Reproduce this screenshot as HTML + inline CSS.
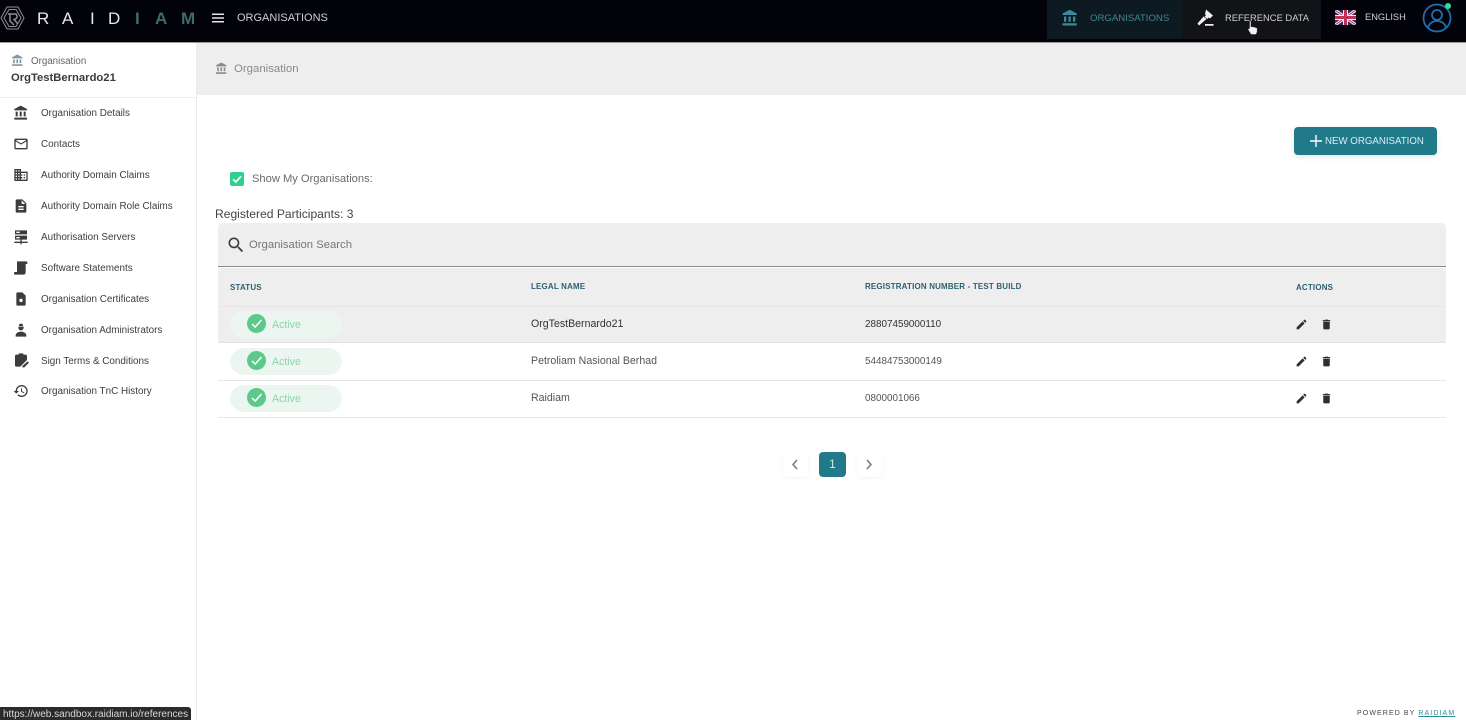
<!DOCTYPE html>
<html><head><meta charset="utf-8"><style>
*{box-sizing:border-box}
html,body{margin:0;padding:0;width:1466px;height:720px;overflow:hidden;background:#fff;font-family:"Liberation Sans",sans-serif;color:#3a3a3a}
.a{position:absolute;white-space:nowrap}
svg{position:absolute;display:block}
.nav{position:absolute;left:41px;font-size:9.9px;color:#3d3d3d;white-space:nowrap;line-height:14px}
.th{position:absolute;font-size:7.95px;font-weight:bold;color:#2c6170;white-space:nowrap;line-height:12px;letter-spacing:.2px}
.td{position:absolute;font-size:10.6px;color:#555;white-space:nowrap;line-height:14px}
.num{font-size:9.9px}
.pill{position:absolute;left:230px;width:112px;height:27px;border-radius:14px;background:#ecf6f0}
.act{position:absolute;left:272px;font-size:10.6px;color:#8fd3a8;line-height:14px}
.lg{position:absolute;top:9px;font-size:17px;line-height:19px;color:#e8e8e8}
.lt{position:absolute;top:9px;font-size:17px;line-height:19px;font-weight:bold;color:#3f6b6b}
</style></head><body>
<div class="a" style="left:0;top:0;width:1466px;height:42px;background:#02020a"></div>
<div class="a" style="left:0;top:42px;width:1466px;height:1px;background:#999"></div>
<svg style="left:0;top:5px" width="26" height="26" viewBox="0 0 26 26" fill="none" stroke="#8f8f8f" stroke-width="1"><path d="M7 2H18L24 13 18 24H7L1 13Z"/><path d="M9 4.500H16L21 13 16 21.500H9L4 13Z"/><path d="M8 9H16Q19 13 14 14.500L18 19M10 9V16L14 20" stroke-width="1.500"/></svg>
<div class="lg" style="left:37px">R</div>
<div class="lg" style="left:62px">A</div>
<div class="lg" style="left:90px">I</div>
<div class="lg" style="left:108px">D</div>
<div class="lt" style="left:135px">I</div>
<div class="lt" style="left:155px">A</div>
<div class="lt" style="left:181px">M</div>
<svg style="left:210px;top:9px" width="16" height="18" viewBox="0 0 24 24" preserveAspectRatio="none" fill="#e4e4e4"><path d="M3 18h18v-2H3v2zm0-5h18v-2H3v2zm0-7v2h18V6H3z"/></svg>
<div class="a" style="left:237px;top:11px;font-size:11px;line-height:14px;color:#d0d0d0">ORGANISATIONS</div>

<div class="a" style="left:1047px;top:0;width:135px;height:39px;background:#0d1a22"></div>
<div class="a" style="left:1182px;top:0;width:139px;height:39px;background:#121316"></div>
<svg style="left:1061px;top:9px" width="18" height="18" viewBox="0 0 24 24" fill="#3e8a9c"><path d="M4 10v7h3v-7H4zm6 0v7h3v-7h-3zM2 22h19v-3H2v3zm14-12v7h3v-7h-3zm-4.5-9L2 6v2h19V6l-9.5-5z"/></svg>
<div class="a" style="left:1090px;top:11px;font-size:9.6px;line-height:15px;color:#3f8797">ORGANISATIONS</div>
<svg style="left:1197px;top:9px" width="18" height="18" viewBox="0 0 18 18" fill="#f0f0f0"><path d="M9 .5l7 6-3 3-1.200-1-1.500 1.500L7.500 7.500 9 6 8 5zM6.500 7.500l3 2.500-7.500 6.500-1.500-2zM8 15h8.500v1.800H8z"/></svg>
<div class="a" style="left:1225px;top:11px;font-size:9.4px;line-height:14px;color:#d0d0d0">REFERENCE DATA</div>
<svg style="left:1247px;top:20px" width="12" height="15" viewBox="0 0 12 15"><path d="M2.500 1h1.500v6l1.200-.4 1.100.3 1.200.2 1.500.5 1.200.6v3.300l-1 3H4L1 9.500c-.3-1 .8-1.300 1.500-.7z" fill="#f2f2f2" stroke="#222" stroke-width=".5"/></svg>
<svg style="left:1335px;top:10px" width="21" height="15" viewBox="0 0 21 15"><rect width="21" height="15" fill="#2a2a55"/><path d="M0 0L21 15M21 0L0 15" stroke="#eee" stroke-width="3"/><path d="M0 0L21 15M21 0L0 15" stroke="#c2305a" stroke-width="1"/><path d="M10.500 0V15M0 7.500H21" stroke="#eee" stroke-width="5"/><path d="M10.500 0V15M0 7.500H21" stroke="#c2305a" stroke-width="3"/></svg>
<div class="a" style="left:1365px;top:10px;font-size:9.3px;line-height:14px;color:#d0d0d0">ENGLISH</div>
<svg style="left:1422px;top:2px" width="30" height="31" viewBox="0 0 30 31" fill="none" stroke="#1f6fb0" stroke-width="1.800"><circle cx="15" cy="16" r="13.500"/><circle cx="15" cy="13" r="5"/><path d="M6 26c1-5 5-7 9-7s8 2 9 7"/></svg>
<div class="a" style="left:1445px;top:3px;width:6px;height:6px;border-radius:50%;background:#2ee08e"></div>

<div class="a" style="left:196px;top:43px;width:1px;height:677px;background:#ececec"></div>
<div class="a" style="left:197px;top:43px;width:1269px;height:52px;background:#eeeeee"></div>
<div class="a" style="left:0;top:97px;width:196px;height:1px;background:#efefef"></div>
<svg style="left:11px;top:54px" width="13" height="13" viewBox="0 0 24 24" fill="#7b9aa5"><path d="M4 10v7h3v-7H4zm6 0v7h3v-7h-3zM2 22h19v-3H2v3zm14-12v7h3v-7h-3zm-4.500-9L2 6v2h19V6l-9.500-5z"/></svg>
<div class="a" style="left:31px;top:55px;font-size:9.750px;line-height:13px;color:#666">Organisation</div>
<div class="a" style="left:11px;top:71px;font-size:11.250px;line-height:15px;font-weight:bold;color:#3b3b3b">OrgTestBernardo21</div>
<svg style="left:215px;top:62px" width="13" height="13" viewBox="0 0 24 24" fill="#8a8a8a"><path d="M4 10v7h3v-7H4zm6 0v7h3v-7h-3zM2 22h19v-3H2v3zm14-12v7h3v-7h-3zm-4.500-9L2 6v2h19V6l-9.500-5z"/></svg>
<div class="a" style="left:234px;top:62px;font-size:11.400px;line-height:15px;color:#8a8a8a">Organisation</div>

<svg style="left:13px;top:105px" width="16" height="16" viewBox="0 0 24 24" fill="#3c3c3c"><path d="M4 10v7h3v-7H4zm6 0v7h3v-7h-3zM2 22h19v-3H2v3zm14-12v7h3v-7h-3zm-4.500-9L2 6v2h19V6l-9.500-5z"/></svg>
<div class="nav" style="top:107px">Organisation Details</div>
<svg style="left:13px;top:136px" width="16" height="16" viewBox="0 0 24 24" fill="#3c3c3c"><path d="M20 4H4c-1.100 0-1.990.9-1.990 2L2 18c0 1.100.9 2 2 2h16c1.100 0 2-.9 2-2V6c0-1.100-.9-2-2-2zm0 14H4V8l8 5 8-5v10zm-8-7L4 6h16l-8 5z"/></svg>
<div class="nav" style="top:138px">Contacts</div>
<svg style="left:13px;top:167px" width="16" height="16" viewBox="0 0 24 24" fill="#3c3c3c"><path d="M12 7V3H2v18h20V7H12zM6 19H4v-2h2v2zm0-4H4v-2h2v2zm0-4H4V9h2v2zm0-4H4V5h2v2zm4 12H8v-2h2v2zm0-4H8v-2h2v2zm0-4H8V9h2v2zm0-4H8V5h2v2zm10 12h-8v-2h2v-2h-2v-2h2v-2h-2V9h8v10zm-2-8h-2v2h2v-2zm0 4h-2v2h2v-2z"/></svg>
<div class="nav" style="top:169px">Authority Domain Claims</div>
<svg style="left:13px;top:198px" width="16" height="16" viewBox="0 0 24 24" fill="#3c3c3c"><path d="M14 2H6c-1.100 0-1.990.9-1.990 2L4 20c0 1.100.89 2 1.990 2H18c1.100 0 2-.9 2-2V8l-6-6zm2 16H8v-2h8v2zm0-4H8v-2h8v2zm-3-5V3.500L18.500 9H13z"/></svg>
<div class="nav" style="top:200px">Authority Domain Role Claims</div>
<svg style="left:13px;top:229px" width="16" height="16" viewBox="0 0 24 24" fill="#3c3c3c"><path d="M3 2h18v6H3zM3 10h18v6H3zM11 16h2v3h9v2h-9v2h-2v-2H2v-2h9z"/><path d="M5 4h5v2H5zM5 12h5v2H5z" fill="#fff"/></svg>
<div class="nav" style="top:231px">Authorisation Servers</div>
<svg style="left:13px;top:260px" width="16" height="16" viewBox="0 0 24 24" fill="#3c3c3c"><path d="M6 2h14c2 0 2 3 1 4h-2v12c0 2-1 4-3 4H3c-2 0-2-4 0-4h3z"/></svg>
<div class="nav" style="top:262px">Software Statements</div>
<svg style="left:13px;top:291px" width="16" height="16" viewBox="0 0 24 24" fill="#3c3c3c"><path d="M14 2H7c-1.100 0-2 .9-2 2v16c0 1.100.9 2 2 2h10c1.100 0 2-.9 2-2V7z"/><circle cx="12" cy="14" r="2.500" fill="#fff"/></svg>
<div class="nav" style="top:293px">Organisation Certificates</div>
<svg style="left:13px;top:322px" width="16" height="16" viewBox="0 0 24 24" fill="#3c3c3c"><path d="M12 2l3 2v2H9V4zM8 7h8v1c0 2.500-1.800 4.500-4 4.500S8 10.500 8 8zM4 20c0-3 4-5.500 8-5.500s8 2.500 8 5.500v2H4z"/></svg>
<div class="nav" style="top:324px">Organisation Administrators</div>
<svg style="left:13px;top:352px" width="16" height="16" viewBox="0 0 24 24" fill="#3c3c3c"><path d="M9 2h6l1 2h3c1 0 2 1 2 2v6l-10 10H5c-1 0-2-1-2-2V6c0-1 1-2 2-2h3zM22 14l2 2-7 7h-3v-2z"/></svg>
<div class="nav" style="top:355px">Sign Terms &amp; Conditions</div>
<svg style="left:13px;top:383px" width="16" height="16" viewBox="0 0 24 24" fill="#3c3c3c"><path d="M13 3c-4.970 0-9 4.030-9 9H1l3.890 3.890.07.14L9 12H6c0-3.870 3.130-7 7-7s7 3.130 7 7-3.130 7-7 7c-1.930 0-3.680-.79-4.940-2.060l-1.420 1.420C8.270 19.990 10.510 21 13 21c4.970 0 9-4.030 9-9s-4.030-9-9-9zm-1 5v5l4.280 2.540.72-1.210-3.500-2.080V8H12z"/></svg>
<div class="nav" style="top:385px">Organisation TnC History</div>

<div class="a" style="left:1294px;top:127px;width:143px;height:28px;background:#207a89;border-radius:4px;box-shadow:0 2px 6px rgba(0,0,0,.1)"></div>
<svg style="left:1309px;top:134px" width="14" height="14" viewBox="0 0 14 14" fill="#fff"><path d="M6.300 1h1.400v5.300H13v1.400H7.700V13H6.300V7.700H1V6.300h5.300z"/></svg>
<div class="a" style="left:1325px;top:135px;font-size:9.700px;line-height:14px;color:#d9eef1">NEW ORGANISATION</div>

<div class="a" style="left:230px;top:172px;width:14px;height:14px;background:#2dd08f;border-radius:2px"></div>
<svg style="left:230px;top:172px" width="14" height="14" viewBox="0 0 14 14" fill="none" stroke="#fff" stroke-width="1.700"><path d="M3 7.300l2.800 2.700L11 4.300"/></svg>
<div class="a" style="left:252px;top:172px;font-size:11.150px;line-height:15px;color:#6a6a6a">Show My Organisations:</div>
<div class="a" style="left:215px;top:206px;font-size:12.100px;line-height:16px;color:#444">Registered Participants: 3</div>

<div class="a" style="left:218px;top:223px;width:1228px;height:44px;background:#eeeeee;border-radius:5px 5px 0 0"></div>
<div class="a" style="left:218px;top:266px;width:1228px;height:1px;background:#8a8a8a"></div>
<svg style="left:226px;top:235px" width="20" height="20" viewBox="0 0 24 24" fill="#3c3c3c"><path d="M15.500 14h-.79l-.28-.27C15.410 12.590 16 11.110 16 9.500 16 5.910 13.090 3 9.500 3S3 5.910 3 9.500 5.910 16 9.500 16c1.610 0 3.090-.59 4.230-1.570l.27.28v.79l5 4.990L20.490 19l-4.990-5zm-6 0C7.010 14 5 11.990 5 9.500S7.010 5 9.500 5 14 7.010 14 9.500 11.990 14 9.500 14z"/></svg>
<div class="a" style="left:249px;top:238px;font-size:11.300px;line-height:15px;color:#777">Organisation Search</div>

<div class="a" style="left:218px;top:268px;width:1228px;height:38px;background:#eeeeee"></div>
<div class="th" style="left:230px;top:282px">STATUS</div>
<div class="th" style="left:531px;top:281px">LEGAL NAME</div>
<div class="th" style="left:865px;top:281px">REGISTRATION NUMBER - TEST BUILD</div>
<div class="th" style="left:1296px;top:282px">ACTIONS</div>

<div class="a" style="left:218px;top:306px;width:1228px;height:37px;background:#eeeeee;border-top:1px solid #e6e6e6;border-bottom:1px solid #e2e2e2"></div>
<div class="a" style="left:218px;top:380px;width:1228px;height:1px;background:#e6e6e6"></div>
<div class="a" style="left:218px;top:417px;width:1228px;height:1px;background:#e6e6e6"></div>

<div class="pill" style="top:311px"></div><div class="pill" style="top:348px"></div><div class="pill" style="top:385px"></div>
<svg style="left:247px;top:314px" width="19" height="19" viewBox="0 0 19 19"><circle cx="9.500" cy="9.500" r="9.500" fill="#5cc98a"/><path d="M5 10l3.200 3L14.500 6" fill="none" stroke="#fff" stroke-width="1.500"/></svg>
<svg style="left:247px;top:351px" width="19" height="19" viewBox="0 0 19 19"><circle cx="9.500" cy="9.500" r="9.500" fill="#5cc98a"/><path d="M5 10l3.200 3L14.500 6" fill="none" stroke="#fff" stroke-width="1.500"/></svg>
<svg style="left:247px;top:388px" width="19" height="19" viewBox="0 0 19 19"><circle cx="9.500" cy="9.500" r="9.500" fill="#5cc98a"/><path d="M5 10l3.200 3L14.500 6" fill="none" stroke="#fff" stroke-width="1.500"/></svg>
<div class="act" style="top:318px">Active</div><div class="act" style="top:355px">Active</div><div class="act" style="top:392px">Active</div>

<div class="td" style="left:531px;top:317px;color:#333">OrgTestBernardo21</div>
<div class="td num" style="left:865px;top:318px;color:#333">28807459000110</div>
<div class="td" style="left:531px;top:354px">Petroliam Nasional Berhad</div>
<div class="td num" style="left:865px;top:355px">54484753000149</div>
<div class="td" style="left:531px;top:391px">Raidiam</div>
<div class="td num" style="left:865px;top:392px">0800001066</div>

<svg style="left:1295px;top:318px" width="13" height="13" viewBox="0 0 24 24" fill="#2f2f2f"><path d="M3 17.250V21h3.750L17.810 9.940l-3.750-3.750L3 17.250zM20.710 7.040c.39-.39.39-1.020 0-1.410l-2.340-2.340c-.39-.39-1.020-.39-1.410 0l-1.830 1.830 3.750 3.750 1.830-1.830z"/></svg>
<svg style="left:1320px;top:318px" width="13" height="13" viewBox="0 0 24 24" fill="#2f2f2f"><path d="M6 19c0 1.100.9 2 2 2h8c1.100 0 2-.9 2-2V7H6v12zM19 4h-3.500l-1-1h-5l-1 1H5v2h14V4z"/></svg>
<svg style="left:1295px;top:355px" width="13" height="13" viewBox="0 0 24 24" fill="#2f2f2f"><path d="M3 17.250V21h3.750L17.810 9.940l-3.750-3.750L3 17.250zM20.710 7.040c.39-.39.39-1.020 0-1.410l-2.340-2.340c-.39-.39-1.020-.39-1.410 0l-1.830 1.830 3.750 3.750 1.830-1.830z"/></svg>
<svg style="left:1320px;top:355px" width="13" height="13" viewBox="0 0 24 24" fill="#2f2f2f"><path d="M6 19c0 1.100.9 2 2 2h8c1.100 0 2-.9 2-2V7H6v12zM19 4h-3.500l-1-1h-5l-1 1H5v2h14V4z"/></svg>
<svg style="left:1295px;top:392px" width="13" height="13" viewBox="0 0 24 24" fill="#2f2f2f"><path d="M3 17.250V21h3.750L17.810 9.940l-3.750-3.750L3 17.250zM20.710 7.040c.39-.39.39-1.020 0-1.410l-2.340-2.340c-.39-.39-1.020-.39-1.410 0l-1.830 1.830 3.750 3.750 1.830-1.830z"/></svg>
<svg style="left:1320px;top:392px" width="13" height="13" viewBox="0 0 24 24" fill="#2f2f2f"><path d="M6 19c0 1.100.9 2 2 2h8c1.100 0 2-.9 2-2V7H6v12zM19 4h-3.500l-1-1h-5l-1 1H5v2h14V4z"/></svg>

<div class="a" style="left:783px;top:452px;width:25px;height:25px;background:#fff;border-radius:4px;box-shadow:0 1px 6px rgba(0,0,0,.05)"></div>
<svg style="left:790px;top:459px" width="10" height="11" viewBox="0 0 10 11" fill="none" stroke="#777" stroke-width="1.500"><path d="M7 1L3 5.500 7 10"/></svg>
<div class="a" style="left:819px;top:452px;width:27px;height:25px;background:#207a89;border-radius:4px;color:#d8eef1;font-size:11.500px;line-height:26px;text-align:center">1</div>
<div class="a" style="left:857px;top:452px;width:25px;height:25px;background:#fff;border-radius:4px;box-shadow:0 1px 6px rgba(0,0,0,.05)"></div>
<svg style="left:864px;top:459px" width="10" height="11" viewBox="0 0 10 11" fill="none" stroke="#777" stroke-width="1.500"><path d="M3 1L7 5.500 3 10"/></svg>

<div class="a" style="left:0;top:707px;width:191px;height:13px;overflow:hidden;background:#2b2b2b;border-radius:0 3px 0 0;color:#d8d8d8;font-size:10px;line-height:16px;padding-left:3px">https://web.sandbox.raidiam.io/references</div>
<div class="a" style="left:1357px;top:709px;font-size:7px;line-height:10px;letter-spacing:1.100px;color:#444">POWERED BY <span style="color:#2c8a99;text-decoration:underline">RAIDIAM</span></div>
</body></html>
